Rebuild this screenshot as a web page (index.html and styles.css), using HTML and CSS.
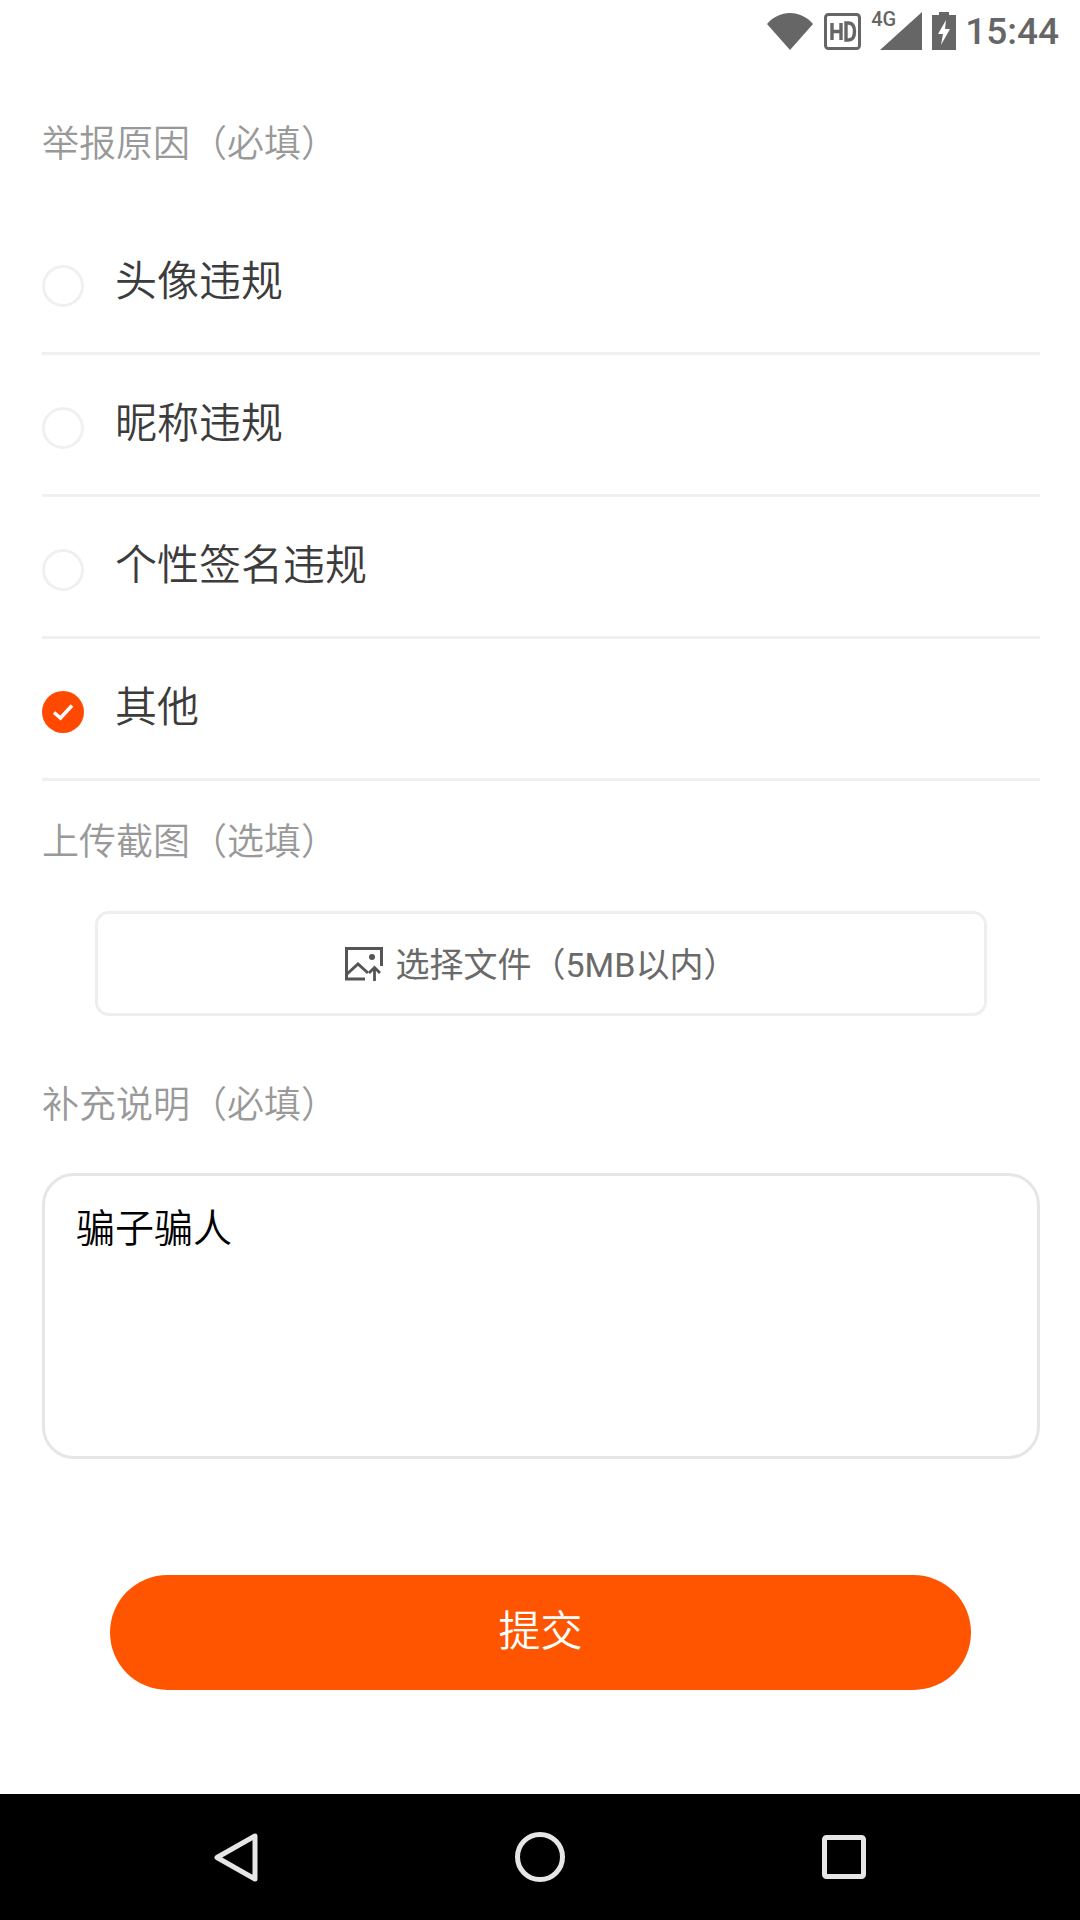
FILE: index.html
```html
<!DOCTYPE html>
<html lang="zh-CN">
<head>
    <meta charset="UTF-8">
    <meta name="viewport" content="width=device-width, initial-scale=1.0">
    <title>举报</title>
    <link rel="stylesheet" href="styles.css">
</head>
<body>
    <div class="status-bar">
        <svg class="ic-wifi" width="46" height="37" viewBox="0 0 46 37"><path d="M0 11C6 4 14 0 23 0s17 4 23 11L23 37z" fill="#666"/></svg>
        <svg class="ic-hd" width="37" height="37" viewBox="0 0 37 37">
            <rect x="1.5" y="1.5" width="34" height="34" rx="3" fill="none" stroke="#666" stroke-width="3"/>
            <path d="M8 10v17M17 10v17M8 18.5h9M22 10v17h2.500c4 0 6-3 6-8.500s-2-8.500-6-8.500z" fill="none" stroke="#666" stroke-width="3.400"/>
        </svg>
        <div class="signal">
            <span class="net">4G</span>
            <svg width="42" height="38" viewBox="0 0 42 38"><path d="M42 0v38H0z" fill="#666"/></svg>
        </div>
        <svg class="ic-batt" width="24" height="38" viewBox="0 0 24 38"><path fill-rule="evenodd" d="M7 0h10v3h7v35H0V3h7zM14 8L6 22h5l-2 11 9-16h-5z" fill="#666"/></svg>
        <span class="clock">15:44</span>
    </div>

    <div class="content">
        <div class="label label-first">举报原因（必填）</div>

        <div class="option">
            <span class="radio"></span>
            <span class="option-text">头像违规</span>
        </div>
        <div class="option">
            <span class="radio"></span>
            <span class="option-text">昵称违规</span>
        </div>
        <div class="option">
            <span class="radio"></span>
            <span class="option-text">个性签名违规</span>
        </div>
        <div class="option">
            <span class="radio checked">
                <svg width="42" height="42" viewBox="0 0 42 42"><path d="M12 21.500l6.500 5.500 11.500-12.500" fill="none" stroke="#fff" stroke-width="3.500"/></svg>
            </span>
            <span class="option-text">其他</span>
        </div>

        <div class="label label-upload">上传截图（选填）</div>
        <div class="upload">
            <svg width="38" height="34" viewBox="0 0 38 34">
                <path d="M20 32H1.500V1.500h35V19" fill="none" stroke="#555" stroke-width="3"/>
                <path d="M2 27l11-10 10 9" fill="none" stroke="#555" stroke-width="3"/>
                <circle cx="27" cy="10" r="3" fill="#555"/>
                <path d="M29.500 34V21M24 26l5.500-5.500L35 26" fill="none" stroke="#555" stroke-width="2.800"/>
            </svg>
            <span>选择文件（5MB以内）</span>
        </div>

        <div class="label label-note">补充说明（必填）</div>
        <div class="note">骗子骗人</div>

        <div class="submit">提交</div>
    </div>

    <div class="nav-bar">
        <svg width="44" height="49" viewBox="0 0 44 49"><path d="M41 3v43L3 24.500z" fill="none" stroke="#e6e6e6" stroke-width="5" stroke-linejoin="round"/></svg>
        <svg width="50" height="50" viewBox="0 0 50 50"><circle cx="25" cy="25" r="22.500" fill="none" stroke="#e6e6e6" stroke-width="5"/></svg>
        <svg width="44" height="44" viewBox="0 0 44 44"><rect x="2.500" y="2.500" width="39" height="39" rx="2" fill="none" stroke="#e6e6e6" stroke-width="5"/></svg>
    </div>
</body>
</html>
```

FILE: styles.css
```css
* {
    box-sizing: border-box;
}
body {
    margin: 0;
    width: 1080px;
    height: 1920px;
    background-color: #fff;
    font-family: Roboto, "Noto Sans CJK SC", sans-serif;
    font-weight: 350;
    display: flex;
    flex-direction: column;
    overflow: hidden;
}
.status-bar {
    height: 63px;
    display: flex;
    align-items: flex-start;
    justify-content: flex-end;
    padding: 12px 21px 0 0;
}
.ic-wifi {
    margin: 1px 11px 0 0;
}
.ic-hd {
    margin: 1px 10px 0 0;
}
.signal {
    width: 51px;
    height: 38px;
    display: flex;
    justify-content: flex-end;
    position: relative;
    margin-right: 10px;
}
.net {
    position: absolute;
    left: 0;
    top: -5px;
    font: 500 20px Roboto, sans-serif;
    color: #666;
}
.clock {
    margin: -6px 0 0 9px;
    font: 500 37px Roboto, sans-serif;
    color: #666;
    line-height: 52px;
}
.content {
    padding: 0 40px 0 42px;
    flex: 1;
    display: flex;
    flex-direction: column;
}
.label {
    font-size: 37px;
    line-height: 50px;
    color: #999;
}
.label-first {
    margin-top: 57px;
    margin-bottom: 43px;
}
.label-upload {
    margin-top: 37px;
}
.label-note {
    margin-top: 65px;
}
.option {
    height: 142px;
    border-bottom: 3px solid #f0f0f0;
    display: flex;
    align-items: center;
    padding-top: 6px;
}
.radio {
    width: 42px;
    height: 42px;
    border-radius: 50%;
    border: 3px solid #f0f0f0;
    margin-right: 31px;
    flex: none;
    position: relative;
}
.radio.checked {
    border: none;
    background-color: #ff4800;
}
.radio svg {
    display: block;
}
.option-text {
    font-size: 42px;
    line-height: 60px;
    color: #3c3c3c;
    position: relative;
    top: -4px;
}
.upload {
    margin: 43px 53px 0;
    height: 105px;
    border: 3px solid #eee;
    border-radius: 14px;
    display: flex;
    align-items: center;
    justify-content: center;
    gap: 13px;
    font-size: 34px;
    font-weight: 400;
    color: #6a6a6a;
}
.upload span {
    margin-bottom: 2px;
}
.note {
    margin-top: 42px;
    height: 286px;
    border: 3px solid #e6e6e6;
    border-radius: 32px;
    padding: 25px 31px;
    font-size: 39px;
    line-height: 56px;
    color: #000;
}
.submit {
    margin: 116px 69px 0 68px;
    height: 115px;
    border-radius: 58px;
    background-color: #ff5500;
    color: #fff;
    font-size: 42px;
    padding-bottom: 10px;
    display: flex;
    align-items: center;
    justify-content: center;
}
.nav-bar {
    height: 126px;
    background-color: #000;
    display: flex;
    align-items: center;
    padding-left: 214px;
    flex: none;
}
.nav-bar svg:nth-child(2) {
    margin-left: 257px;
}
.nav-bar svg:nth-child(3) {
    margin-left: 257px;
}
```
